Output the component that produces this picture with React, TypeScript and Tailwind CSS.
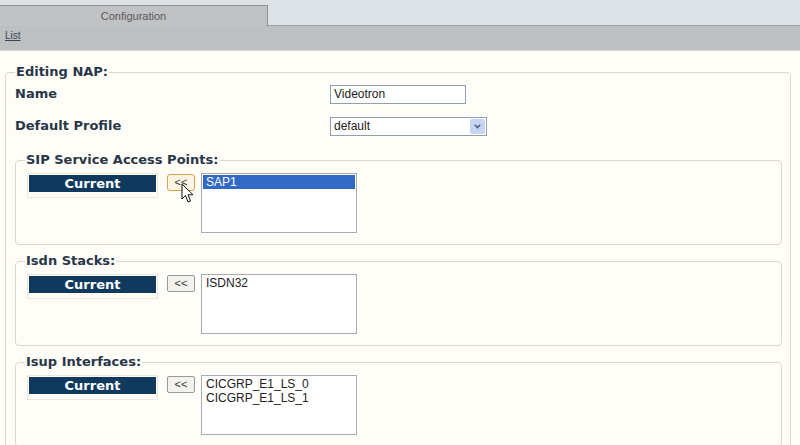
import React from "react";

type Group = {
  title: string;
  items: string[];
  selected?: number;
  hover?: boolean;
};

const groups: Group[] = [
  { title: "SIP Service Access Points:", items: ["SAP1"], selected: 0, hover: true },
  { title: "Isdn Stacks:", items: ["ISDN32"] },
  { title: "Isup Interfaces:", items: ["CICGRP_E1_LS_0", "CICGRP_E1_LS_1"] },
];

function Cursor() {
  return (
    <svg
      className="pointer-events-none absolute left-[14px] top-[9px]"
      width="13"
      height="21"
      viewBox="0 0 13 21"
    >
      <path
        d="M1 1 L1 16 L4.5 12.5 L7 19 L9.5 18 L7 11.8 L12 11.8 Z"
        fill="#fff"
        stroke="#111"
        strokeWidth="1"
        strokeLinejoin="round"
      />
    </svg>
  );
}

function GroupBox({ group }: { group: Group }) {
  return (
    <fieldset className="rounded-[4px] border border-[#dcd8ce] pl-[11px] pr-[10px] pt-[5px] pb-[11px]">
      <legend className="-ml-[2px] px-[1px] text-[13px] font-bold leading-[16px] text-[#283649]">
        {group.title}
      </legend>
      <div className="flex items-start">
        <div className="w-[131px] border border-[#ebe7de] bg-[#fffdf7] p-px pb-[5px]">
          <div className="flex h-[17px] items-center justify-center bg-[#0f3a5e] text-[13px] font-bold text-white">
            Current
          </div>
        </div>
        <div className="relative ml-[9px] mt-px">
          <button
            className={
              group.hover
                ? "flex h-[17px] w-[28px] items-center justify-center rounded-[3px] border border-[#d9a24e] bg-[#fcf5e3] font-['Liberation_Sans',sans-serif] text-[11px] leading-none text-[#333]"
                : "flex h-[17px] w-[28px] items-center justify-center rounded-[2px] border border-[#9a9a9a] bg-[#f3f2ee] font-['Liberation_Sans',sans-serif] text-[11px] leading-none text-[#333]"
            }
          >
            &lt;&lt;
          </button>
          {group.hover && <Cursor />}
        </div>
        <div className="ml-[6px] h-[60px] w-[156px] border border-[#a7acb3] bg-white p-px font-['Liberation_Sans',sans-serif] text-[12px] leading-[14px] text-[#222]">
          {group.items.map((it, i) => (
            <div
              key={it}
              className={
                i === group.selected
                  ? "bg-[#316ac5] pl-[3px] text-white"
                  : "pl-[3px]"
              }
            >
              {it}
            </div>
          ))}
        </div>
      </div>
    </fieldset>
  );
}

export default function App() {
  return (
    <div className="min-h-[445px] w-[800px] overflow-hidden bg-[#fffdf7] font-['DejaVu_Sans',sans-serif]">
      {/* tab strip */}
      <div className="flex h-[26px] border-b border-[#9ea1a4] bg-[#dde2e6] pt-[5px]">
        <div className="-mb-px flex w-[268px] items-center justify-center border-t border-r border-[#8f9295] bg-[#c0c2c4] font-['Liberation_Sans',sans-serif] text-[11px] text-[#5a5a5a]">
          Configuration
        </div>
      </div>
      <div className="flex h-[25px] items-start border-b border-[#d9d7d0] bg-[#bdbfc1] px-[5px] pt-[4px]">
        <a className="font-['Liberation_Sans',sans-serif] text-[10px] leading-[12px] text-[#3a4657] underline">
          List
        </a>
      </div>

      <fieldset className="ml-[5px] mt-[13px] w-[786px] rounded-[4px] border border-[#dcd8ce] pl-[9px] pr-[8px]">
        <legend className="px-[1px] text-[13px] font-bold leading-[16px] text-[#283649]">
          Editing NAP:
        </legend>
        <div className="mt-[4px] grid grid-cols-[315px_1fr] gap-y-[12px]">
          <div className="flex h-[20px] items-center text-[13px] font-bold text-[#283649]">
            Name
          </div>
          <div className="flex h-[20px] items-center">
            <div className="flex h-[19px] w-[136px] items-center border border-[#8ea0b4] bg-white pl-[3px] font-['Liberation_Sans',sans-serif] text-[12px] text-[#222]">
              Videotron
            </div>
          </div>
          <div className="flex h-[20px] items-center text-[13px] font-bold text-[#283649]">
            Default Profile
          </div>
          <div className="flex h-[20px] items-center">
            <div className="flex h-[19px] w-[157px] items-center border border-[#8ea0b4] bg-white font-['Liberation_Sans',sans-serif] text-[12px] text-[#222]">
              <span className="flex-1 pl-[3px]">default</span>
              <span className="mr-px flex h-[15px] w-[15px] items-center justify-center rounded-[2px] bg-[#c6d5f2]">
                <svg width="7" height="5" viewBox="0 0 7 5">
                  <path d="M0.8 0.8 L3.5 3.6 L6.2 0.8" fill="none" stroke="#4d6185" strokeWidth="1.6" />
                </svg>
              </span>
            </div>
          </div>
        </div>

        <div className="mt-[16px] flex flex-col gap-[8px] pb-[12px]">
          {groups.map((g) => (
            <GroupBox key={g.title} group={g} />
          ))}
        </div>
      </fieldset>
    </div>
  );
}
